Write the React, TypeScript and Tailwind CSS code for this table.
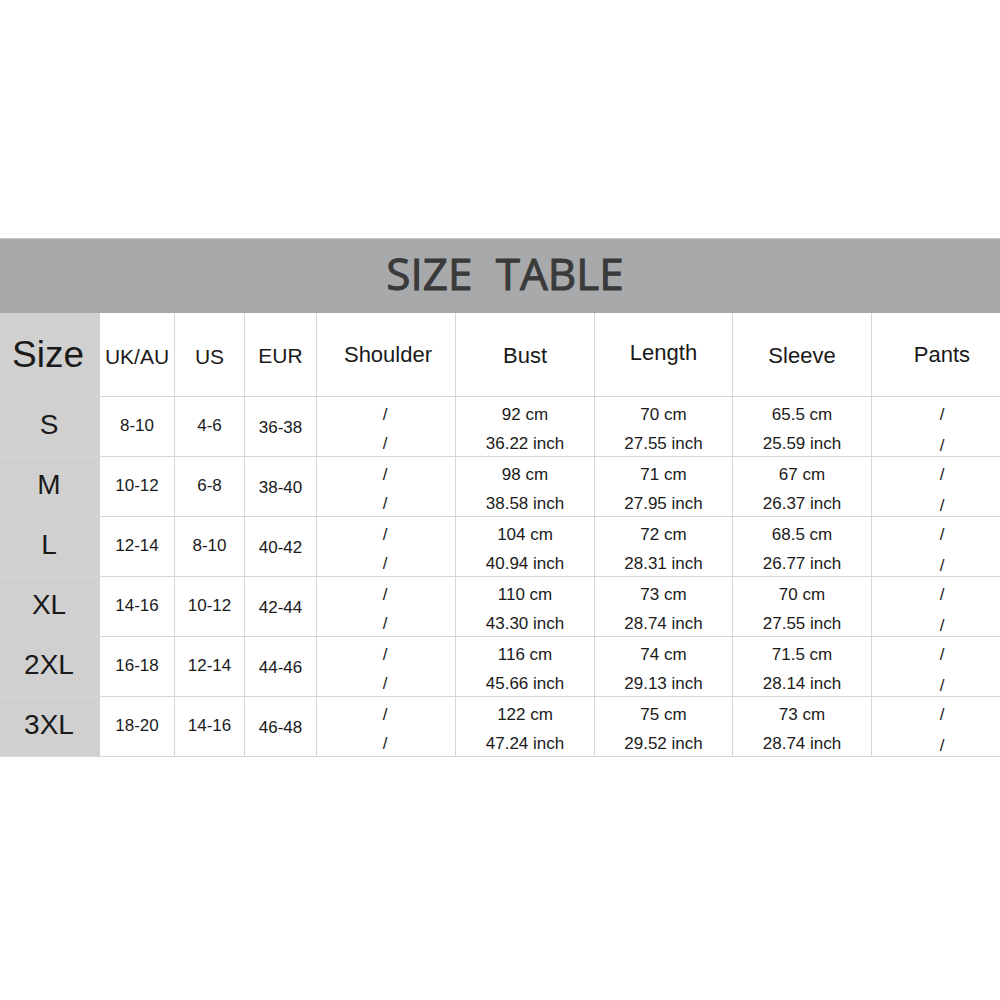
import React from "react";

const cols = [
  "w-[100px]",
  "w-[75px]",
  "w-[70px]",
  "w-[72px]",
  "w-[139px]",
  "w-[139px]",
  "w-[138px]",
  "w-[139px]",
  "w-[128px]",
];

const rows = [
  { size: "S", uk: "8-10", us: "4-6", eur: "36-38", bust: ["92 cm", "36.22 inch"], length: ["70 cm", "27.55 inch"], sleeve: ["65.5 cm", "25.59 inch"] },
  { size: "M", uk: "10-12", us: "6-8", eur: "38-40", bust: ["98 cm", "38.58 inch"], length: ["71 cm", "27.95 inch"], sleeve: ["67 cm", "26.37 inch"] },
  { size: "L", uk: "12-14", us: "8-10", eur: "40-42", bust: ["104 cm", "40.94 inch"], length: ["72 cm", "28.31 inch"], sleeve: ["68.5 cm", "26.77 inch"] },
  { size: "XL", uk: "14-16", us: "10-12", eur: "42-44", bust: ["110 cm", "43.30 inch"], length: ["73 cm", "28.74 inch"], sleeve: ["70 cm", "27.55 inch"] },
  { size: "2XL", uk: "16-18", us: "12-14", eur: "44-46", bust: ["116 cm", "45.66 inch"], length: ["74 cm", "29.13 inch"], sleeve: ["71.5 cm", "28.14 inch"] },
  { size: "3XL", uk: "18-20", us: "14-16", eur: "46-48", bust: ["122 cm", "47.24 inch"], length: ["75 cm", "29.52 inch"], sleeve: ["73 cm", "28.74 inch"] },
];

function Pair({ w, top, bottom }: { w: string; top: string; bottom: string }) {
  return (
    <div className={`${w} flex flex-col items-center justify-center pt-[5px] text-[17px] leading-[29px] border-r border-[#d6d6d6]`}>
      <span>{top}</span>
      <span>{bottom}</span>
    </div>
  );
}

export default function App() {
  return (
    <div className="w-[1000px] h-[1000px] bg-white text-[#1a1a1a] font-['Liberation_Sans',Arial,sans-serif] pt-[238px]">
      <div className="h-[75px] bg-[#a8a9ab] border-t border-[#c4c5c7] flex items-center justify-center">
        <h1 className="font-['Open_Sans',sans-serif] font-normal [-webkit-text-stroke:1px_#3a3a3a] text-[44px] text-[#3a3a3a] [word-spacing:12px] ml-[10px] mb-[6px]">
          SIZE TABLE
        </h1>
      </div>

      <div className="flex h-[84px] border-b border-[#d6d6d6]">
        <div className={`${cols[0]} bg-[#d0d0d0] flex items-center justify-center text-[37px] pr-[4px]`}>Size</div>
        <div className={`${cols[1]} flex items-center justify-center text-[21px] border-r border-[#d6d6d6] pt-[4px]`}>UK/AU</div>
        <div className={`${cols[2]} flex items-center justify-center text-[21px] border-r border-[#d6d6d6] pt-[4px]`}>US</div>
        <div className={`${cols[3]} flex items-center justify-center text-[21px] border-r border-[#d6d6d6] pt-[2px]`}>EUR</div>
        <div className={`${cols[4]} flex items-center justify-center text-[22px] border-r border-[#d6d6d6] pl-[4px]`}>Shoulder</div>
        <div className={`${cols[5]} flex items-center justify-center text-[22px] border-r border-[#d6d6d6] pt-[1px]`}>Bust</div>
        <div className={`${cols[6]} flex items-center justify-center text-[22px] border-r border-[#d6d6d6] pb-[5px]`}>Length</div>
        <div className={`${cols[7]} flex items-center justify-center text-[22px] border-r border-[#d6d6d6] pt-[2px]`}>Sleeve</div>
        <div className={`${cols[8]} flex items-center justify-center text-[22px] pl-[12px]`}>Pants</div>
      </div>

      {rows.map((r) => (
        <div key={r.size} className="flex h-[60px] border-b border-[#d6d6d6]">
          <div className={`${cols[0]} bg-[#d0d0d0] flex items-center justify-center text-[28px] pb-[4px] pr-[2px]`}>{r.size}</div>
          <div className={`${cols[1]} flex items-center justify-center text-[17px] border-r border-[#d6d6d6] pb-[2px]`}>{r.uk}</div>
          <div className={`${cols[2]} flex items-center justify-center text-[17px] border-r border-[#d6d6d6] pb-[2px]`}>{r.us}</div>
          <div className={`${cols[3]} flex items-center justify-center text-[17px] border-r border-[#d6d6d6] pt-[2px]`}>{r.eur}</div>
          <Pair w={`${cols[4]} pr-[2px]`} top="/" bottom="/" />
          <Pair w={cols[5]} top={r.bust[0]} bottom={r.bust[1]} />
          <Pair w={cols[6]} top={r.length[0]} bottom={r.length[1]} />
          <Pair w={cols[7]} top={r.sleeve[0]} bottom={r.sleeve[1]} />
          <div className={`${cols[8]} flex flex-col items-center text-[17px] pl-[12px] pt-[8px]`}>
            <span className="leading-[20px]">/</span>
            <span className="leading-[20px] mt-[11px]">/</span>
          </div>
        </div>
      ))}
    </div>
  );
}
